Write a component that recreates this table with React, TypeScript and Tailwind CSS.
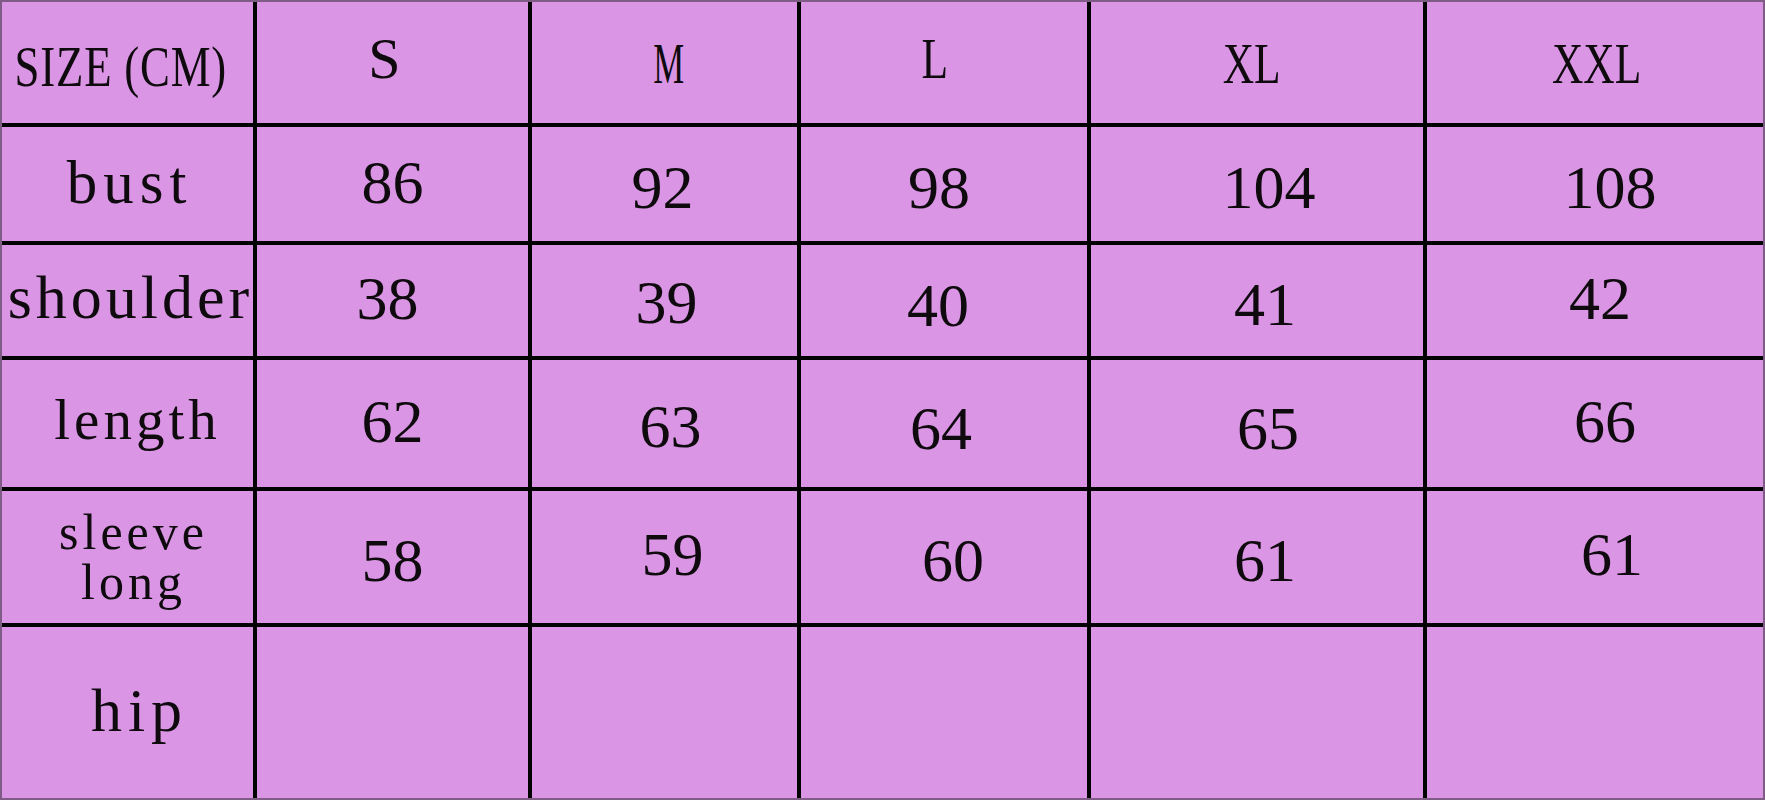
import React from 'react';

type Cell = { text: string; cls: string; inner?: string };

// column widths and row heights taken from the size chart picture
const DIGIT = 'text-[62px]';

const ROWS: Cell[][] = [
  [
    { text: 'SIZE (CM)', cls: 'text-[56px] pr-[14px] pt-[8px]', inner: 'scale-x-80 tracking-[1px]' },
    { text: 'S', cls: 'text-[58px] pr-[16px] pb-[8px]' },
    { text: 'M', cls: 'text-[58px] pl-[8px] pt-[2px]', inner: 'scale-x-60' },
    { text: 'L', cls: 'text-[58px] pr-[18px] pb-[8px]', inner: 'scale-x-75' },
    { text: 'XL', cls: 'text-[58px] pr-[10px] pt-[2px]', inner: 'scale-x-75' },
    { text: 'XXL', cls: 'text-[58px] pl-[4px] pt-[2px]', inner: 'scale-x-75' },
  ],
  [
    { text: 'bust', cls: 'text-[61px] tracking-[6px] pl-[4px] pb-[4px]' },
    { text: '86', cls: `${DIGIT} pb-[4px]` },
    { text: '92', cls: `${DIGIT} pr-[4px] pt-[6px]` },
    { text: '98', cls: `${DIGIT} pr-[10px] pt-[6px]` },
    { text: '104', cls: `${DIGIT} pl-[24px] pt-[6px]` },
    { text: '108', cls: `${DIGIT} pl-[30px] pt-[6px]` },
  ],
  [
    { text: 'shoulder', cls: 'text-[62px] tracking-[4px] pl-[6px] pb-[8px]' },
    { text: '38', cls: `${DIGIT} pr-[10px] pb-[6px]` },
    { text: '39', cls: `${DIGIT} pl-[4px] pt-[2px]` },
    { text: '40', cls: `${DIGIT} pr-[12px] pt-[8px]` },
    { text: '41', cls: `${DIGIT} pl-[16px] pt-[6px]` },
    { text: '42', cls: `${DIGIT} pl-[10px] pb-[6px]` },
  ],
  [
    { text: 'length', cls: 'text-[57px] tracking-[4px] pl-[20px] pb-[8px]' },
    { text: '62', cls: `${DIGIT} pb-[6px]` },
    { text: '63', cls: `${DIGIT} pl-[12px] pt-[4px]` },
    { text: '64', cls: `${DIGIT} pr-[6px] pt-[8px]` },
    { text: '65', cls: `${DIGIT} pl-[22px] pt-[8px]` },
    { text: '66', cls: `${DIGIT} pl-[20px] pb-[6px]` },
  ],
  [
    { text: 'sleeve\nlong', cls: 'text-[50px] leading-[54px] tracking-[4px] pl-[12px]' },
    { text: '58', cls: `${DIGIT} pt-[6px]` },
    { text: '59', cls: `${DIGIT} pl-[16px] pb-[6px]` },
    { text: '60', cls: `${DIGIT} pl-[18px] pt-[6px]` },
    { text: '61', cls: `${DIGIT} pl-[16px] pt-[6px]` },
    { text: '61', cls: `${DIGIT} pl-[34px] pb-[6px]` },
  ],
  [
    { text: 'hip', cls: 'text-[62px] tracking-[6px] pl-[24px] pb-[6px]' },
    { text: '', cls: '' },
    { text: '', cls: '' },
    { text: '', cls: '' },
    { text: '', cls: '' },
    { text: '', cls: '' },
  ],
];

export default function App() {
  return (
    <div className="w-[1765px] h-[800px] border-2 border-[#7e5c85] bg-black overflow-hidden">
      <div
        className="grid h-full w-full gap-[4px] grid-cols-[251px_271px_265px_286px_332px_336px] grid-rows-[121px_114px_111px_127px_132px_171px]"
        style={{ fontFamily: '"Liberation Serif", "Times New Roman", serif' }}
      >
        {ROWS.flat().map((cell, i) => (
          <div
            key={i}
            className={`bg-[#da96e4] flex items-center justify-center text-center text-[#0e0a0e] leading-none whitespace-pre-line ${cell.cls}`}
          >
            {cell.inner ? (
              <span className={`inline-block whitespace-nowrap ${cell.inner}`}>{cell.text}</span>
            ) : (
              cell.text
            )}
          </div>
        ))}
      </div>
    </div>
  );
}
